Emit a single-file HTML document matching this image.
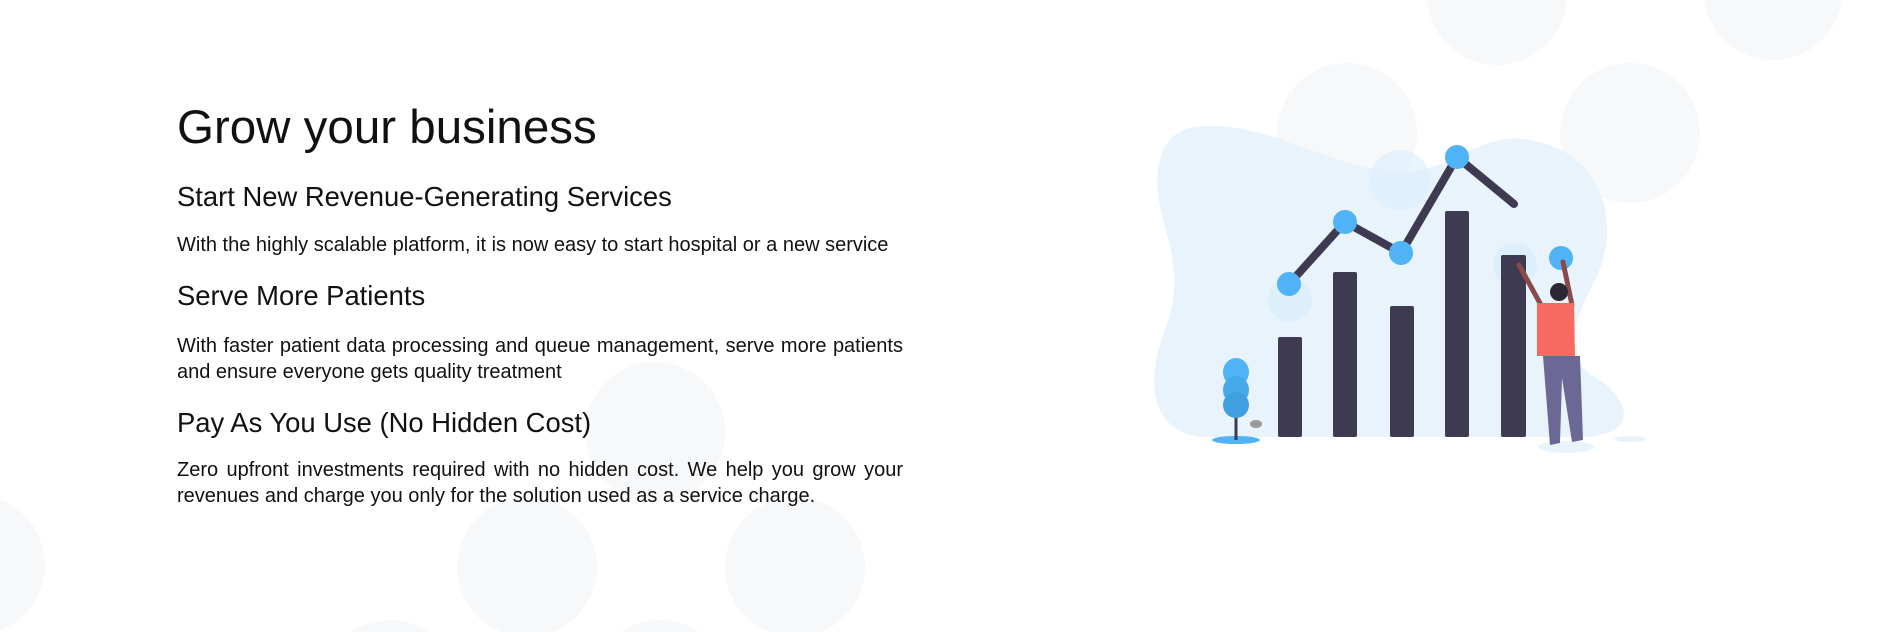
<!DOCTYPE html>
<html><head><meta charset="utf-8"><style>
html,body{margin:0;padding:0;width:1901px;height:632px;overflow:hidden;background:#fff;font-family:"Liberation Sans",Arial,sans-serif;color:#111}
#w{position:relative;width:1901px;height:632px;overflow:hidden}
.c{position:absolute;border-radius:50%;background:#f7f8fa;width:140px;height:140px}
.t{position:absolute;left:177px;width:726px;margin:0;font-weight:normal;white-space:nowrap}
p.t{white-space:normal;text-align:justify;font-size:20px;line-height:26px}
h1.t{font-size:47.5px;line-height:56px;top:100px}
h3.t{font-size:27.4px;line-height:30px}
svg{position:absolute;left:0;top:0}
</style></head><body><div id="w">
<div class="c" style="left:1427px;top:-75px"></div>
<div class="c" style="left:1703px;top:-80px"></div>
<div class="c" style="left:1277px;top:63px"></div>
<div class="c" style="left:1560px;top:63px"></div>
<div class="c" style="left:585px;top:362px"></div>
<div class="c" style="left:457px;top:497px"></div>
<div class="c" style="left:725px;top:497px"></div>
<div class="c" style="left:-95px;top:495px"></div>
<div class="c" style="left:320px;top:620px"></div>
<div class="c" style="left:590px;top:620px"></div>

<h1 class="t">Grow your business</h1>
<h3 class="t" style="top:182px">Start New Revenue-Generating Services</h3>
<p class="t" style="top:232px">With the highly scalable platform, it is now easy to start hospital or a new service</p>
<h3 class="t" style="top:281px">Serve More Patients</h3>
<p class="t" style="top:333px">With faster patient data processing and queue management, serve more patients and ensure everyone gets quality treatment</p>
<h3 class="t" style="top:408px">Pay As You Use (No Hidden Cost)</h3>
<p class="t" style="top:457px">Zero upfront investments required with no hidden cost. We help you grow your revenues and charge you only for the solution used as a service charge.</p>

<svg width="1901" height="632" viewBox="0 0 1901 632">
<path d="M1190 128 C1260 115 1330 170 1400 172 C1450 174 1480 130 1530 140 C1610 155 1620 230 1595 280 C1570 330 1560 360 1600 380 C1640 410 1630 440 1570 437 L1200 437 C1150 430 1145 380 1165 330 C1180 290 1175 260 1163 220 C1150 170 1160 135 1190 128 Z" fill="#e8f3fc"/>
<circle cx="1290" cy="300" r="22" fill="#dbeefb" opacity=".8"/>
<circle cx="1400" cy="180" r="30" fill="#dbeefb" opacity=".6"/>
<circle cx="1515" cy="265" r="22" fill="#dbeefb" opacity=".8"/>
<g fill="#3d3a52">
<rect x="1278" y="337" width="24" height="100" rx="2"/>
<rect x="1333" y="272" width="24" height="165" rx="2"/>
<rect x="1390" y="306" width="24" height="131" rx="2"/>
<rect x="1445" y="211" width="24" height="226" rx="2"/>
<rect x="1501" y="255" width="25" height="182" rx="2"/>
</g>
<polyline points="1289,284 1345,222 1401,253 1457,157 1514,204" fill="none" stroke="#3d3a52" stroke-width="8" stroke-linecap="round" stroke-linejoin="round"/>
<g fill="#4fb3f6">
<ellipse cx="1289" cy="284" rx="12" ry="12"/>
<ellipse cx="1345" cy="222" rx="12" ry="12"/>
<ellipse cx="1401" cy="253" rx="12" ry="12"/>
<ellipse cx="1457" cy="157" rx="12" ry="12"/>
<ellipse cx="1561" cy="258" rx="12" ry="12"/>
</g>
<ellipse cx="1236" cy="440" rx="24" ry="4" fill="#4fb3f6"/>
<line x1="1236" y1="400" x2="1236" y2="440" stroke="#3d3a52" stroke-width="3"/>
<ellipse cx="1236" cy="372" rx="13" ry="14" fill="#4fb3f6"/>
<ellipse cx="1236" cy="390" rx="13" ry="14" fill="#47a8ea"/>
<ellipse cx="1236" cy="405" rx="13" ry="13" fill="#3f9fdf"/>
<ellipse cx="1256" cy="424" rx="6" ry="4" fill="#999"/>
<ellipse cx="1566" cy="447" rx="28" ry="6" fill="#e8f3fc"/>
<ellipse cx="1630" cy="439" rx="16" ry="3" fill="#e8f3fc"/>
<path d="M1541 305 L1519 265" stroke="#8a4a4a" stroke-width="5" stroke-linecap="round"/>
<path d="M1572 305 L1563 262" stroke="#8a4a4a" stroke-width="5" stroke-linecap="round"/>
<path d="M1543 356 L1580 356 L1583 440 L1572 442 L1562 378 L1560 443 L1550 445 Z" fill="#6b6896"/>
<path d="M1537 303 L1574 303 L1575 356 L1537 356 Z" fill="#f8695f"/>
<circle cx="1559" cy="292" r="9" fill="#2b2733"/>
</svg>
</div></body></html>
